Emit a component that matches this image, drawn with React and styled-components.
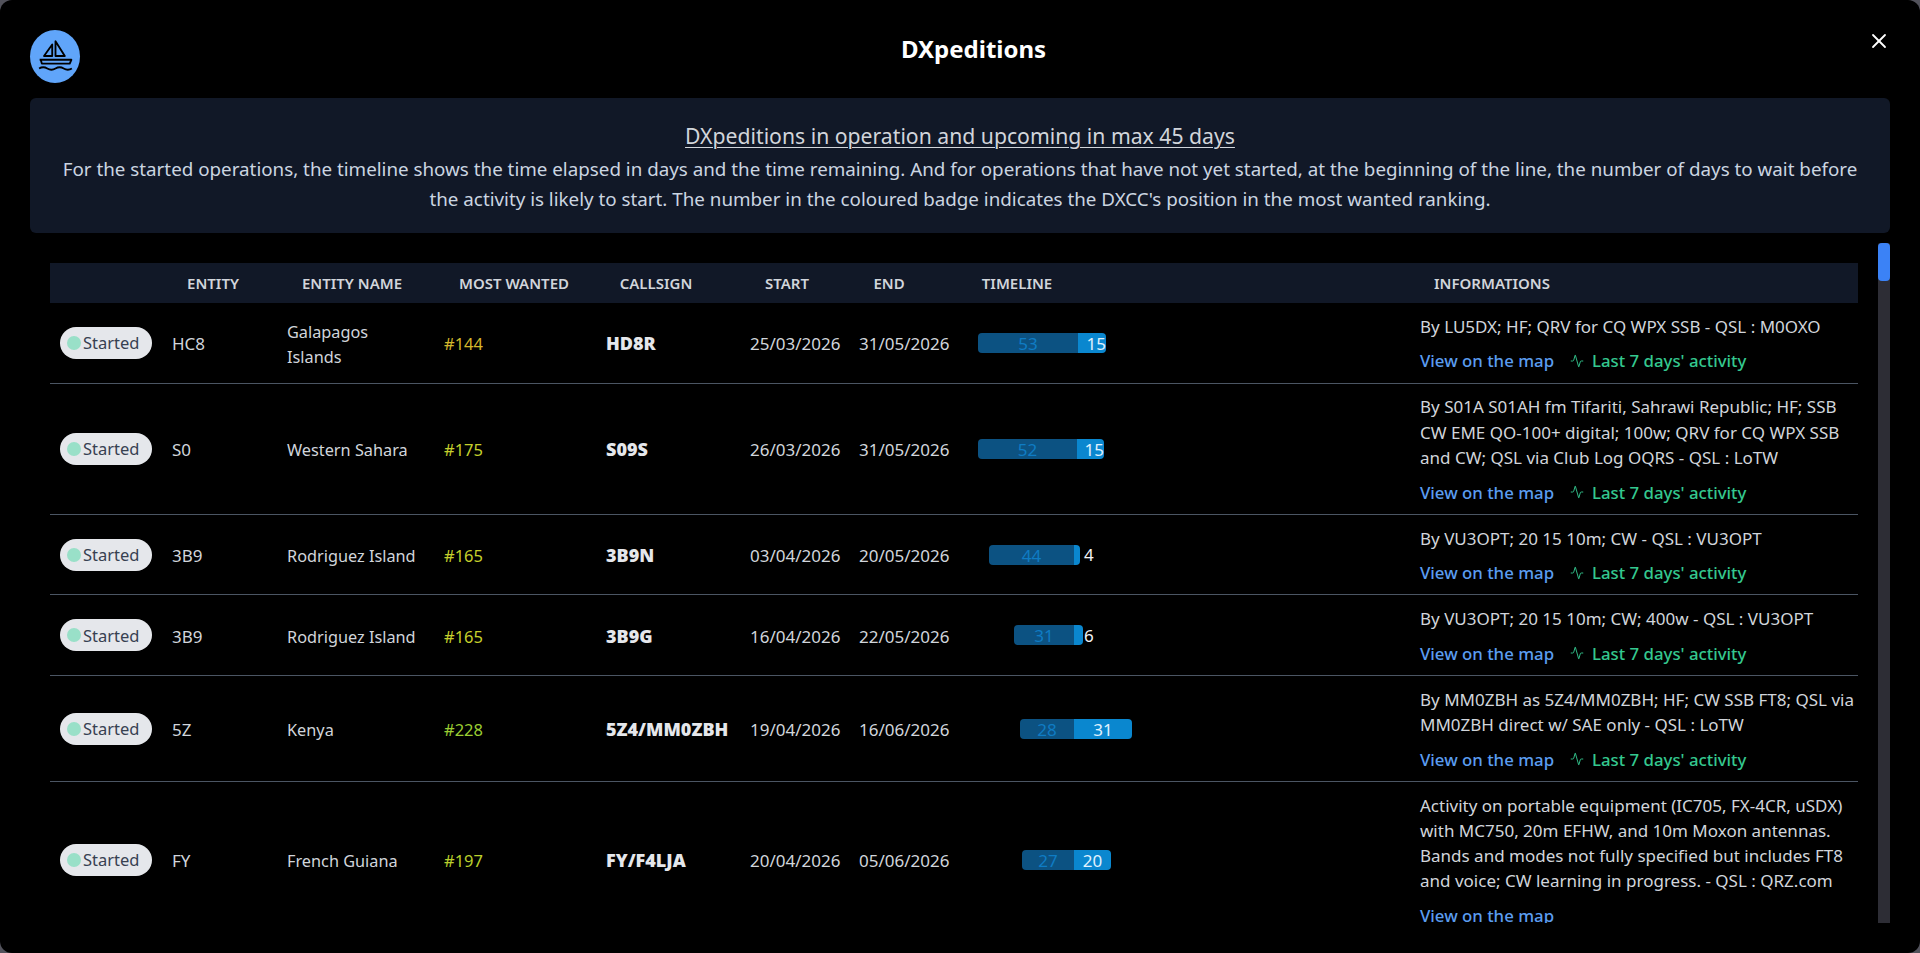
import React from 'react';
import styled, { createGlobalStyle } from 'styled-components';
import { X, Activity } from 'lucide-react';

const Global = createGlobalStyle`
  html, body { margin: 0; padding: 0; height: 100%; background: #52525b; overflow: hidden; }
  body { font-family: "Noto Sans", "Open Sans", sans-serif; }
`;

const Modal = styled.div`
  width: 1920px;
  height: 953px;
  background: #000;
  border-radius: 12px;
  overflow: hidden;
  display: flex;
  flex-direction: column;
  box-sizing: border-box;
  padding: 29px 30px 30px;
`;
const Header = styled.header`
  display: flex;
  justify-content: space-between;
  align-items: flex-start;
  height: 69px;
  flex: none;
`;
const LogoBadge = styled.div`
  width: 50px;
  height: 53px;
  margin-top: 1px;
  border-radius: 50%;
  background: #60a5fa;
  display: flex;
  align-items: center;
  justify-content: center;
  color: #000;
`;
const Title = styled.h3`
  margin: 1px 0 0;
  font-size: 24px;
  line-height: 38px;
  font-weight: 700;
  color: #fff;
`;
const CloseButton = styled.button`
  all: unset;
  display: flex;
  width: 24px;
  height: 24px;
  margin-right: -1px;
  color: #fff;
`;
const Banner = styled.section`
  flex: none;
  height: 135px;
  box-sizing: border-box;
  padding: 22px 20px 0;
  background: #111827;
  border-radius: 6px;
  text-align: center;
  color: #cbd5e1;
`;
const BannerTitle = styled.div`
  font-size: 21.2px;
  line-height: 32px;
  text-decoration: underline;
  text-decoration-thickness: 1px;
  text-underline-offset: 3px;
  color: #d1d5db;
`;
const BannerText = styled.p`
  margin: 2px 0 0;
  font-size: 18.8px;
  line-height: 30px;
`;
const Body = styled.div`
  flex: 1;
  min-height: 0;
  margin-top: 10px;
  display: flex;
`;
const TableArea = styled.div`
  flex: 1;
  min-width: 0;
  overflow: hidden;
  padding: 20px 20px 0;
`;
const HeaderRow = styled.div`
  display: grid;
  grid-template-columns: 92px 142px 136px 188px 96px 166px 38px 218px 732px;
  height: 40px;
  align-items: center;
  background: #111827;
`;
const HeadCell = styled.div`
  display: flex;
  justify-content: center;
  font-size: 15px;
  font-weight: 600;
  color: #d1d5db;
  text-transform: uppercase;
  white-space: nowrap;
`;
const Row = styled.div`
  display: grid;
  grid-template-columns: 112px 115px 157px 162px 144px 109px 119px 442px 448px;
  align-items: center;
  border-bottom: 1px solid #4b5563;
  color: #d1d5db;
  font-size: 17px;
  line-height: 25.2px;
`;
const Cell = styled.div`
  padding: 2px 0 0 10px;
  white-space: nowrap;
`;
const NameCell = styled(Cell)`
  padding-top: 4px;
  font-size: 16.3px;
`;
const PillCell = styled.div`
  padding-left: 10px;
  display: flex;
`;
const TimelineCell = styled.div`
  padding-left: 10px;
`;
const Pill = styled.span`
  display: inline-flex;
  align-items: center;
  gap: 2px;
  width: 92px;
  height: 32px;
  box-sizing: border-box;
  padding-left: 7px;
  border-radius: 16px;
  background: #e5e7eb;
  color: #374151;
  font-size: 16.5px;
`;
const Dot = styled.i`
  width: 14px;
  height: 14px;
  border-radius: 50%;
  background: #99e0c8;
`;
const Rank = styled.span`
  color: ${(p) => p.$color};
  font-size: 16.5px;
`;
const Callsign = styled.span`
  font-weight: 800;
  font-family: "Open Sans", sans-serif;
  font-size: 18px;
  color: #e5e7eb;
`;
const Timeline = styled.div`
  display: flex;
  align-items: center;
`;
const Bar = styled.div`
  display: flex;
  height: 20px;
  border-radius: 4px;
  overflow: hidden;
  line-height: 21px;
  text-align: center;
`;
const Elapsed = styled.div`
  background: #0c5282;
  color: #0f7cc4;
`;
const Remaining = styled.div`
  background: #0a87cf;
  color: #e0f2fe;
  text-align: ${(p) => (p.$tight ? 'right' : 'center')};
  white-space: nowrap;
`;
const Outside = styled.span`
  color: #f3f4f6;
`;
const Info = styled.div`
  padding: 10.8px 0 9.700px 10px;
  white-space: nowrap;
`;
const Links = styled.div`
  display: flex;
  align-items: center;
  height: 24px;
  margin-top: 10px;
  font-size: 16.8px;
  font-weight: 500;
`;
const MapLink = styled.a`
  color: #5b9df0;
`;
const ActivityLink = styled.a`
  margin-left: 16px;
  display: inline-flex;
  align-items: center;
  gap: 8px;
  color: #34c88f;
`;
const Track = styled.div`
  flex: none;
  width: 12px;
  background: #2d2d35;
  border-radius: 2px 2px 0 0;
`;
const Thumb = styled.div`
  height: 38px;
  border-radius: 4px;
  background: #3b82f6;
`;

const Boat = () => (
  <svg width="35" height="35" viewBox="0 0 32 32" fill="none" stroke="currentColor" strokeWidth="1.700">
    <path d="M13 5v10.500H5.500z" strokeLinejoin="round" />
    <path d="M16 2v13.500h8.500z" strokeLinejoin="round" />
    <path d="M1.500 19h29l-1.500 3.500H3.500L2.500 19" strokeLinejoin="round" />
    <path d="M1 27c2.500-1.500 5-1.500 7.500 0s5 1.500 7.500 0 5-1.500 7.500 0 5 1.500 7.500 0" />
  </svg>
);

const rows = [
  { entity: 'HC8', name: <>Galapagos<br />Islands</>, rank: '#144', color: '#d4b72c', call: 'HD8R', start: '25/03/2026', end: '31/05/2026', off: 0, a: 53, aw: 100, b: 15, bw: 28, tight: true, info: 'By LU5DX; HF; QRV for CQ WPX SSB - QSL : M0OXO' },
  { entity: 'S0', name: 'Western Sahara', rank: '#175', color: '#c4cf2c', call: 'S09S', start: '26/03/2026', end: '31/05/2026', off: 0, a: 52, aw: 99, b: 15, bw: 27, tight: true, info: <>By S01A S01AH fm Tifariti, Sahrawi Republic; HF; SSB<br />CW EME QO-100+ digital; 100w; QRV for CQ WPX SSB<br />and CW; QSL via Club Log OQRS - QSL : LoTW</> },
  { entity: '3B9', name: 'Rodriguez Island', rank: '#165', color: '#c6d02c', call: '3B9N', start: '03/04/2026', end: '20/05/2026', off: 11, a: 44, aw: 85, b: null, bw: 6, out: 4, gap: 4, info: 'By VU3OPT; 20 15 10m; CW - QSL : VU3OPT' },
  { entity: '3B9', name: 'Rodriguez Island', rank: '#165', color: '#c6d02c', call: '3B9G', start: '16/04/2026', end: '22/05/2026', off: 36, a: 31, aw: 60, b: null, bw: 9, out: 6, gap: 1, info: 'By VU3OPT; 20 15 10m; CW; 400w - QSL : VU3OPT' },
  { entity: '5Z', name: 'Kenya', rank: '#228', color: '#9acd32', call: '5Z4/MM0ZBH', start: '19/04/2026', end: '16/06/2026', off: 42, a: 28, aw: 54, b: 31, bw: 58, info: <>By MM0ZBH as 5Z4/MM0ZBH; HF; CW SSB FT8; QSL via<br />MM0ZBH direct w/ SAE only - QSL : LoTW</> },
  { entity: 'FY', name: 'French Guiana', rank: '#197', color: '#b9cf2c', call: 'FY/F4LJA', start: '20/04/2026', end: '05/06/2026', off: 44, a: 27, aw: 52, b: 20, bw: 37, noActivity: true, info: <>Activity on portable equipment (IC705, FX-4CR, uSDX)<br />with MC750, 20m EFHW, and 10m Moxon antennas.<br />Bands and modes not fully specified but includes FT8<br />and voice; CW learning in progress. - QSL : QRZ.com</> },
];

export default function App() {
  return (
    <>
      <Global />
      <Modal>
        <Header>
          <LogoBadge><Boat /></LogoBadge>
          <Title>DXpeditions</Title>
          <CloseButton aria-label="Close"><X size={24} strokeWidth={1.8} /></CloseButton>
        </Header>
        <Banner>
          <BannerTitle>DXpeditions in operation and upcoming in max 45 days</BannerTitle>
          <BannerText>
            For the started operations, the timeline shows the time elapsed in days and the time remaining. And for operations that have not yet started, at the beginning of the line, the number of days to wait before<br />
            the activity is likely to start. The number in the coloured badge indicates the DXCC's position in the most wanted ranking.
          </BannerText>
        </Banner>
        <Body>
          <TableArea>
            <HeaderRow>
              <HeadCell />
              <HeadCell>Entity</HeadCell>
              <HeadCell>Entity name</HeadCell>
              <HeadCell>Most wanted</HeadCell>
              <HeadCell>Callsign</HeadCell>
              <HeadCell>Start</HeadCell>
              <HeadCell>End</HeadCell>
              <HeadCell>Timeline</HeadCell>
              <HeadCell>Informations</HeadCell>
            </HeaderRow>
            {rows.map((r) => (
              <Row key={r.call}>
                <PillCell><Pill><Dot />Started</Pill></PillCell>
                <Cell>{r.entity}</Cell>
                <NameCell>{r.name}</NameCell>
                <Cell><Rank $color={r.color}>{r.rank}</Rank></Cell>
                <Cell><Callsign>{r.call}</Callsign></Cell>
                <Cell>{r.start}</Cell>
                <Cell>{r.end}</Cell>
                <TimelineCell>
                  <Timeline style={{ marginLeft: r.off }}>
                    <Bar>
                      <Elapsed style={{ width: r.aw }}>{r.a}</Elapsed>
                      <Remaining $tight={r.tight} style={{ width: r.bw }}>{r.b}</Remaining>
                    </Bar>
                    {r.out != null && <Outside style={{ marginLeft: r.gap }}>{r.out}</Outside>}
                  </Timeline>
                </TimelineCell>
                <Info>
                  <div>{r.info}</div>
                  <Links>
                    <MapLink>View on the map</MapLink>
                    {!r.noActivity && (
                      <ActivityLink><Activity size={14} strokeWidth={1.6} />Last 7 days' activity</ActivityLink>
                    )}
                  </Links>
                </Info>
              </Row>
            ))}
          </TableArea>
          <Track><Thumb /></Track>
        </Body>
      </Modal>
    </>
  );
}
